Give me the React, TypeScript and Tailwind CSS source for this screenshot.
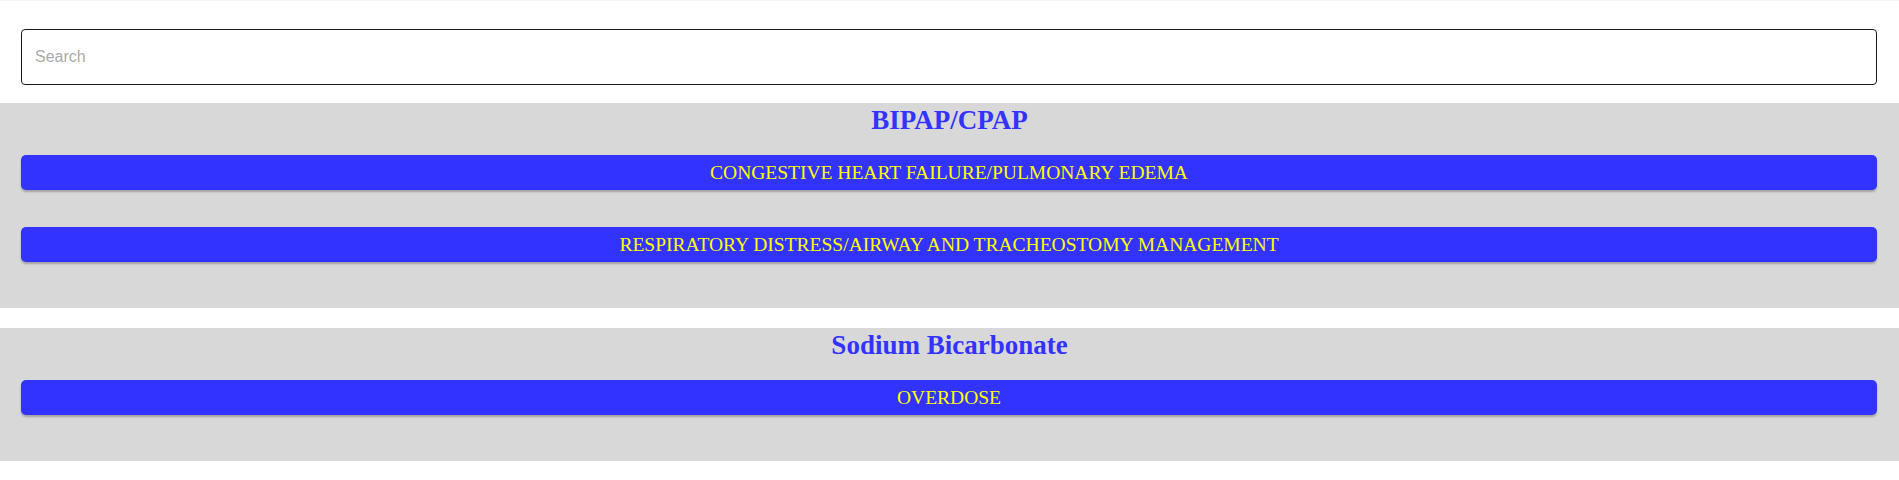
import React, { useState } from 'react';

interface Protocol {
  title: string;
  items: string[];
}

const protocols: Protocol[] = [
  {
    title: 'BIPAP/CPAP',
    items: ['CONGESTIVE HEART FAILURE/PULMONARY EDEMA', 'RESPIRATORY DISTRESS/AIRWAY AND TRACHEOSTOMY MANAGEMENT'],
  },
  {
    title: 'Sodium Bicarbonate',
    items: ['OVERDOSE'],
  },
];

export default function App() {
  const [query, setQuery] = useState('');

  return (
    <div className="min-h-[480px] w-full bg-white border-t border-[#f3f3f3]">
      {/* Search */}
      <div className="pt-[28px] pb-[18px] pl-[21px] pr-[22px]">
        <div className="h-[56px] border border-solid border-[#1a1a1a] rounded-[4px] bg-white flex items-center">
          <input
            type="text"
            value={query}
            onChange={(e) => setQuery(e.target.value)}
            placeholder="Search"
            className="w-full h-full border-0 bg-transparent outline-none pl-[13px] pr-3 text-[16px] text-[#222] placeholder:text-[#aaaaaa] font-['Liberation_Sans',Arial,sans-serif]"
          />
        </div>
      </div>

      {/* Medication groups */}
      <div className="flex flex-col gap-[20px]">
        {protocols.map((p) => (
          <section key={p.title} className="bg-[#d8d8d8] pb-[46px]">
            <h2 className="pt-[2px] text-center text-[27px] leading-[31px] font-bold text-[#3333ff] font-['Liberation_Serif','Times_New_Roman',serif]">
              {p.title}
            </h2>
            <div className="mt-[19px] flex flex-col gap-[37px] pl-[21px] pr-[22px]">
              {p.items.map((item) => (
                <button
                  key={item}
                  className="h-[35px] w-full rounded-[5px] bg-[#3333ff] text-[#ffff00] text-[19.5px] leading-none shadow-[0_2px_2px_rgba(0,0,0,0.25)] font-['Liberation_Serif','Times_New_Roman',serif]"
                >
                  {item}
                </button>
              ))}
            </div>
          </section>
        ))}
      </div>
    </div>
  );
}
